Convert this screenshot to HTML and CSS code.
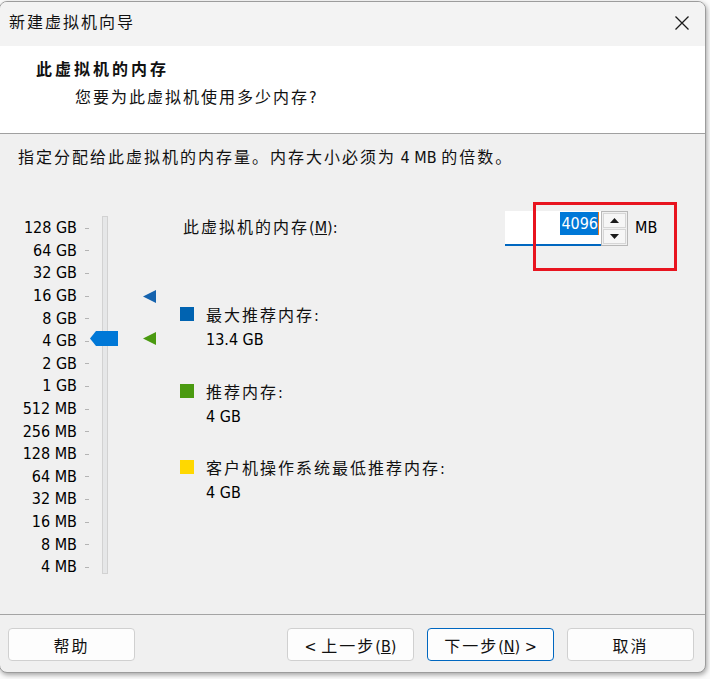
FILE: index.html
```html
<!DOCTYPE html>
<html lang="zh-CN">
<head>
<meta charset="utf-8">
<title>新建虚拟机向导</title>
<link rel="stylesheet" href="styles.css">
</head>
<body>
<div class="window">
  <div class="titlebar">
    <span class="title cjk">新建虚拟机向导</span>
    <svg class="close" width="16" height="16" viewBox="0 0 16 16"><path d="M1.5 1.5L14.5 14.5M14.5 1.5L1.5 14.5" stroke="#1a1a1a" stroke-width="1.3" fill="none"/></svg>
  </div>
  <div class="header">
    <div class="h-title">此虚拟机的内存</div>
    <div class="h-sub cjk">您要为此虚拟机使用多少内存?</div>
  </div>
  <div class="content">
    <div class="intro cjk">指定分配给此虚拟机的内存量。内存大小必须为<span class="lat"> 4 MB </span>的倍数。</div>
    <div class="main">
      <div class="scale">
        <div class="labels">
          <div class="row"><span>128 GB</span><i class="tick"></i></div>
          <div class="row"><span>64 GB</span><i class="tick"></i></div>
          <div class="row"><span>32 GB</span><i class="tick"></i></div>
          <div class="row"><span>16 GB</span><i class="tick"></i></div>
          <div class="row"><span>8 GB</span><i class="tick"></i></div>
          <div class="row"><span>4 GB</span><i class="tick"></i></div>
          <div class="row"><span>2 GB</span><i class="tick"></i></div>
          <div class="row"><span>1 GB</span><i class="tick"></i></div>
          <div class="row"><span>512 MB</span><i class="tick"></i></div>
          <div class="row"><span>256 MB</span><i class="tick"></i></div>
          <div class="row"><span>128 MB</span><i class="tick"></i></div>
          <div class="row"><span>64 MB</span><i class="tick"></i></div>
          <div class="row"><span>32 MB</span><i class="tick"></i></div>
          <div class="row"><span>16 MB</span><i class="tick"></i></div>
          <div class="row"><span>8 MB</span><i class="tick"></i></div>
          <div class="row"><span>4 MB</span><i class="tick"></i></div>
        </div>
        <div class="track"></div>
        <div class="thumb"></div>
        <div class="marker marker-max"></div>
        <div class="marker marker-rec"></div>
      </div>
      <div class="panel">
        <div class="mem-row">
          <span class="mem-label cjk">此虚拟机的内存<span class="lat">(<u>M</u>):</span></span>
          <div class="input"><span class="sel">4096</span></div>
          <div class="spin">
            <div class="spin-btn"><i class="arrow-up"></i></div>
            <div class="spin-btn"><i class="arrow-down"></i></div>
          </div>
          <span class="unit">MB</span>
        </div>
        <div class="legend">
          <div class="group">
            <div class="g-label"><i class="sq sq-blue"></i><span class="cjk">最大推荐内存:</span></div>
            <div class="g-value">13.4 GB</div>
          </div>
          <div class="group">
            <div class="g-label"><i class="sq sq-green"></i><span class="cjk">推荐内存:</span></div>
            <div class="g-value">4 GB</div>
          </div>
          <div class="group">
            <div class="g-label"><i class="sq sq-yellow"></i><span class="cjk">客户机操作系统最低推荐内存:</span></div>
            <div class="g-value">4 GB</div>
          </div>
        </div>
      </div>
    </div>
  </div>
  <div class="footer">
    <button class="btn cjk">帮助</button>
    <div class="spacer"></div>
    <button class="btn cjk"><span class="lat">&lt; </span>上一步<span class="lat">(<u>B</u>)</span></button>
    <button class="btn btn-default cjk">下一步<span class="lat">(<u>N</u>) &gt;</span></button>
    <button class="btn cjk">取消</button>
  </div>
</div>
<div class="highlight"></div>
</body>
</html>
```

FILE: styles.css
```css
html, body {
  margin: 0;
  padding: 0;
}
body {
  width: 710px;
  height: 679px;
  background: #fbfbfb;
  font-family: "DejaVu Sans Condensed", "DejaVu Sans", "Noto Sans CJK SC", sans-serif;
  font-size: 16px;
  color: #111;
  position: relative;
  overflow: hidden;
}
.cjk {
  letter-spacing: 2px;
}
.lat {
  letter-spacing: 0;
}
.window {
  box-sizing: border-box;
  margin-top: 1px;
  margin-left: -1px;
  width: 707px;
  height: 672px;
  border: 1px solid #9c9c9c;
  border-radius: 8px;
  background: #f0f0f0;
  overflow: hidden;
  display: flex;
  flex-direction: column;
  box-shadow: 1px 2px 5px rgba(0,0,0,0.35);
}
.titlebar {
  height: 44px;
  flex: none;
  background: #f3f3f3;
  display: flex;
  align-items: center;
  padding-left: 9px;
}
.title {
  flex: 1;
  line-height: 20px;
  margin-top: -3px;
}
.close {
  margin-right: 15px;
  margin-top: -3px;
}
.header {
  flex: none;
  height: 88px;
  box-sizing: border-box;
  background: #fff;
  border-bottom: 1px solid #a0a0a0;
  padding-top: 12px;
  padding-left: 36px;
}
.h-title {
  font-weight: bold;
  line-height: 24px;
  letter-spacing: 3px;
}
.h-sub {
  line-height: 24px;
  margin-top: 4px;
  margin-left: 39px;
}
.content {
  flex: 1;
  padding-top: 14px;
}
.intro {
  line-height: 20px;
  padding-left: 18px;
}
.main {
  display: flex;
  margin-top: 31px;
}
.scale {
  position: relative;
  display: flex;
  flex: none;
  width: 108px;
  height: 380px;
}
.labels {
  width: 90px;
  padding-top: 18px;
}
.row {
  height: 22.6px;
  display: flex;
  align-items: center;
  justify-content: flex-end;
  padding-right: 1px;
  white-space: nowrap;
  line-height: 20px;
  color: #000;
}
.tick {
  width: 4px;
  height: 1px;
  background: #b4b4b4;
  margin-left: 8px;
}
.track {
  box-sizing: border-box;
  margin-left: 12px;
  margin-top: 17px;
  width: 6px;
  height: 358px;
  background: #e6e7e8;
  border: 1px solid #d2d2d2;
}
.thumb {
  position: absolute;
  left: 90px;
  top: 132px;
  width: 28px;
  height: 15px;
  background: #0078d7;
  clip-path: polygon(6px 0, 100% 0, 100% 100%, 6px 100%, 0 50%);
}
.marker {
  position: absolute;
  left: 143px;
  width: 13px;
  height: 13px;
  clip-path: polygon(0 50%, 100% 0, 100% 100%);
}
.marker-max {
  top: 91px;
  background: #1563ae;
}
.marker-rec {
  top: 133px;
  background: #4a9a10;
}
.panel {
  margin-left: 72px;
  display: flex;
  flex-direction: column;
}
.mem-row {
  margin-top: 12px;
  display: flex;
  align-items: flex-start;
}
.mem-label {
  width: 322px;
  padding-left: 3px;
  line-height: 34px;
  white-space: nowrap;
}
.input {
  box-sizing: border-box;
  width: 96px;
  height: 35px;
  background: #fff;
  border-bottom: 2px solid #0067c0;
  display: flex;
  justify-content: flex-end;
  align-items: flex-start;
  padding: 1px 2px 0 0;
}
.sel {
  background: #0078d7;
  color: #fff;
  line-height: 23px;
  padding: 0 0 0 1px;
  border-right: 1px solid #e8791c;
}
.spin {
  box-sizing: border-box;
  width: 27px;
  height: 35px;
  border: 1px solid #b8b8b8;
  display: flex;
  flex-direction: column;
  padding: 1px;
  gap: 1px;
  background: #f0f0f0;
}
.spin-btn {
  flex: 1;
  background: #f6f6f6;
  border: 1px solid #d6d6d6;
  display: flex;
  align-items: center;
  justify-content: center;
}
.arrow-up, .arrow-down {
  width: 9px;
  height: 5px;
  background: #1a1a1a;
}
.arrow-up {
  clip-path: polygon(50% 0, 100% 100%, 0 100%);
}
.arrow-down {
  clip-path: polygon(0 0, 100% 0, 50% 100%);
}
.unit {
  margin-left: 7px;
  line-height: 34px;
  color: #000;
}
.legend {
  margin-top: 56px;
  display: flex;
  flex-direction: column;
  gap: 26.5px;
}
.g-label {
  display: flex;
  align-items: center;
  height: 24px;
  white-space: nowrap;
}
.sq {
  width: 14px;
  height: 14px;
  margin-right: 12px;
}
.sq-blue { background: #0063b1; }
.sq-green { background: #4a9a10; }
.sq-yellow { background: #ffd800; }
.g-value {
  line-height: 24px;
  padding-top: 2px;
  padding-left: 26px;
  color: #000;
}
.footer {
  flex: none;
  height: 58px;
  box-sizing: border-box;
  border-top: 1px solid #a4a4a4;
  display: flex;
  align-items: flex-start;
  padding: 13px 11px 0 8px;
  gap: 13px;
}
.spacer {
  flex: 1;
}
.btn {
  width: 127px;
  height: 33px;
  box-sizing: border-box;
  border: 1px solid #d0d0d0;
  border-radius: 4px;
  background: #fdfdfd;
  font-family: inherit;
  font-size: 16px;
  color: #111;
  padding: 0;
}
.btn-default {
  border-color: #0067c0;
}
.highlight {
  position: absolute;
  left: 533px;
  top: 202px;
  width: 144px;
  height: 69px;
  box-sizing: border-box;
  border: 3px solid #e8141f;
}
```
